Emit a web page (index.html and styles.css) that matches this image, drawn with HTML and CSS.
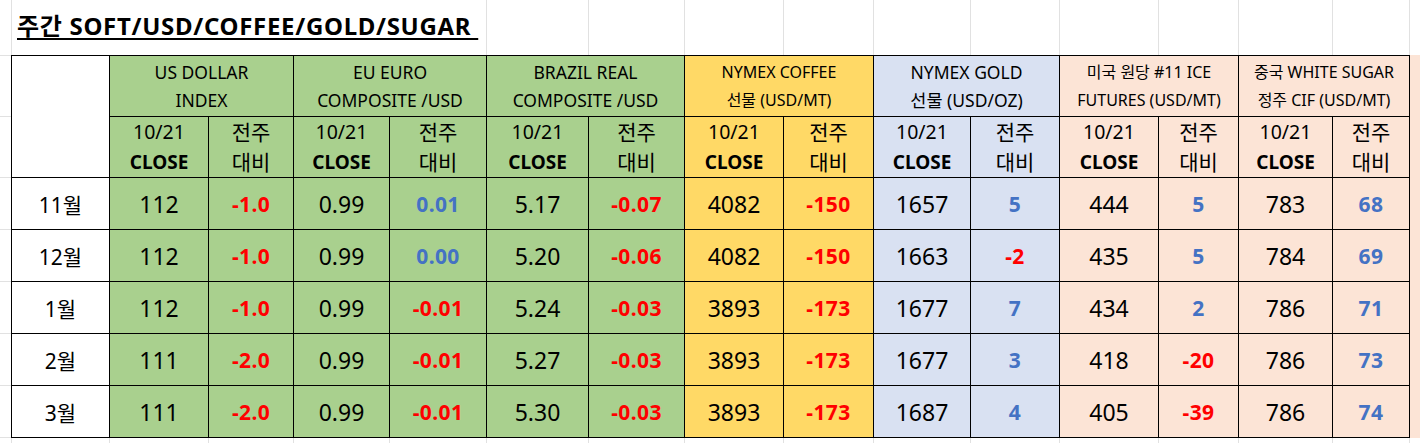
FILE: index.html
```html
<!DOCTYPE html>
<html lang="ko">
<head>
<meta charset="utf-8">
<title>주간 SOFT/USD/COFFEE/GOLD/SUGAR</title>
<link rel="stylesheet" href="styles.css">
</head>
<body>
<div class="sheet">
  <div class="title-cell"><h1 class="title">주간 SOFT/USD/COFFEE/GOLD/SUGAR </h1></div>
  <div class="board">
    <div class="tbl">
      <div class="c corner"></div>
      <div class="c grp green"><span class="h1">US DOLLAR</span><span class="h1">INDEX</span></div>
      <div class="c grp green"><span class="h1">EU EURO</span><span class="h1">COMPOSITE /USD</span></div>
      <div class="c grp green"><span class="h1">BRAZIL REAL</span><span class="h1">COMPOSITE /USD</span></div>
      <div class="c grp yellow coffee"><span class="h1">NYMEX COFFEE</span><span class="h1">선물 (USD/MT)</span></div>
      <div class="c grp blue gold"><span class="h1">NYMEX GOLD</span><span class="h1">선물 (USD/OZ)</span></div>
      <div class="c grp peach sugar"><span class="h1">미국 원당 #11 ICE</span><span class="h1">FUTURES (USD/MT)</span></div>
      <div class="c grp peach sugar"><span class="h1">중국 WHITE SUGAR</span><span class="h1">정주 CIF (USD/MT)</span></div>

      <div class="c sub green"><span>10/21</span><b>CLOSE</b></div>
      <div class="c sub green"><span class="kr">전주</span><span class="kr">대비</span></div>
      <div class="c sub green"><span>10/21</span><b>CLOSE</b></div>
      <div class="c sub green"><span class="kr">전주</span><span class="kr">대비</span></div>
      <div class="c sub green"><span>10/21</span><b>CLOSE</b></div>
      <div class="c sub green"><span class="kr">전주</span><span class="kr">대비</span></div>
      <div class="c sub yellow"><span>10/21</span><b>CLOSE</b></div>
      <div class="c sub yellow"><span class="kr">전주</span><span class="kr">대비</span></div>
      <div class="c sub blue"><span>10/21</span><b>CLOSE</b></div>
      <div class="c sub blue"><span class="kr">전주</span><span class="kr">대비</span></div>
      <div class="c sub peach"><span>10/21</span><b>CLOSE</b></div>
      <div class="c sub peach"><span class="kr">전주</span><span class="kr">대비</span></div>
      <div class="c sub peach"><span>10/21</span><b>CLOSE</b></div>
      <div class="c sub peach"><span class="kr">전주</span><span class="kr">대비</span></div>

      <div class="c month">11월</div>
      <div class="c val green">112</div><div class="c chg green neg">-1.0</div>
      <div class="c val green">0.99</div><div class="c chg green pos">0.01</div>
      <div class="c val green">5.17</div><div class="c chg green neg">-0.07</div>
      <div class="c val yellow">4082</div><div class="c chg yellow neg">-150</div>
      <div class="c val blue">1657</div><div class="c chg blue pos">5</div>
      <div class="c val peach">444</div><div class="c chg peach pos">5</div>
      <div class="c val peach">783</div><div class="c chg peach pos">68</div>

      <div class="c month">12월</div>
      <div class="c val green">112</div><div class="c chg green neg">-1.0</div>
      <div class="c val green">0.99</div><div class="c chg green pos">0.00</div>
      <div class="c val green">5.20</div><div class="c chg green neg">-0.06</div>
      <div class="c val yellow">4082</div><div class="c chg yellow neg">-150</div>
      <div class="c val blue">1663</div><div class="c chg blue neg">-2</div>
      <div class="c val peach">435</div><div class="c chg peach pos">5</div>
      <div class="c val peach">784</div><div class="c chg peach pos">69</div>

      <div class="c month">1월</div>
      <div class="c val green">112</div><div class="c chg green neg">-1.0</div>
      <div class="c val green">0.99</div><div class="c chg green neg">-0.01</div>
      <div class="c val green">5.24</div><div class="c chg green neg">-0.03</div>
      <div class="c val yellow">3893</div><div class="c chg yellow neg">-173</div>
      <div class="c val blue">1677</div><div class="c chg blue pos">7</div>
      <div class="c val peach">434</div><div class="c chg peach pos">2</div>
      <div class="c val peach">786</div><div class="c chg peach pos">71</div>

      <div class="c month">2월</div>
      <div class="c val green">111</div><div class="c chg green neg">-2.0</div>
      <div class="c val green">0.99</div><div class="c chg green neg">-0.01</div>
      <div class="c val green">5.27</div><div class="c chg green neg">-0.03</div>
      <div class="c val yellow">3893</div><div class="c chg yellow neg">-173</div>
      <div class="c val blue">1677</div><div class="c chg blue pos">3</div>
      <div class="c val peach">418</div><div class="c chg peach neg">-20</div>
      <div class="c val peach">786</div><div class="c chg peach pos">73</div>

      <div class="c month">3월</div>
      <div class="c val green">111</div><div class="c chg green neg">-2.0</div>
      <div class="c val green">0.99</div><div class="c chg green neg">-0.01</div>
      <div class="c val green">5.30</div><div class="c chg green neg">-0.03</div>
      <div class="c val yellow">3893</div><div class="c chg yellow neg">-173</div>
      <div class="c val blue">1687</div><div class="c chg blue pos">4</div>
      <div class="c val peach">405</div><div class="c chg peach neg">-39</div>
      <div class="c val peach">786</div><div class="c chg peach pos">74</div>
    </div>
    <div class="strip"></div>
  </div>
</div>
</body>
</html>
```

FILE: styles.css
```css
* { box-sizing: border-box; margin: 0; padding: 0; }

html, body { height: 100%; }

body {
  font-family: "Noto Sans", "Noto Sans CJK KR", sans-serif;
  color: #000;
  background-color: #fff;
  background-repeat: no-repeat;
  background-image:
    linear-gradient(#e1e1e1, #e1e1e1), linear-gradient(#e1e1e1, #e1e1e1),
    linear-gradient(#e1e1e1, #e1e1e1), linear-gradient(#e1e1e1, #e1e1e1),
    linear-gradient(#e1e1e1, #e1e1e1), linear-gradient(#e1e1e1, #e1e1e1),
    linear-gradient(#e1e1e1, #e1e1e1), linear-gradient(#e1e1e1, #e1e1e1),
    linear-gradient(#e1e1e1, #e1e1e1), linear-gradient(#e1e1e1, #e1e1e1),
    linear-gradient(#e1e1e1, #e1e1e1), linear-gradient(#e1e1e1, #e1e1e1),
    linear-gradient(#e1e1e1, #e1e1e1), linear-gradient(#e1e1e1, #e1e1e1),
    linear-gradient(#e1e1e1, #e1e1e1), linear-gradient(#e1e1e1, #e1e1e1),
    linear-gradient(#e1e1e1, #e1e1e1), linear-gradient(#e1e1e1, #e1e1e1),
    linear-gradient(#e1e1e1, #e1e1e1), linear-gradient(#e1e1e1, #e1e1e1),
    linear-gradient(#e1e1e1, #e1e1e1), linear-gradient(#e1e1e1, #e1e1e1),
    linear-gradient(#e1e1e1, #e1e1e1), linear-gradient(#e1e1e1, #e1e1e1);
  background-size:
    1px 100%, 1px 100%, 1px 100%, 1px 100%, 1px 100%, 1px 100%, 1px 100%, 1px 100%,
    1px 100%, 1px 100%, 1px 100%, 1px 100%, 1px 100%, 1px 100%, 1px 100%, 1px 100%,
    11px 1px, 11px 1px, 11px 1px, 11px 1px, 11px 1px, 11px 1px, 11px 1px, 11px 1px;
  background-position:
    11px 0, 109px 0, 208px 0, 293px 0, 389px 0, 486px 0, 588px 0, 684px 0,
    783px 0, 873px 0, 970px 0, 1059px 0, 1158px 0, 1238px 0, 1332px 0, 1409px 0,
    0 55px, 0 116px, 0 177px, 0 229px, 0 281px, 0 333px, 0 385px, 0 437px;
}

.sheet {
  padding-left: 11px;
}

.title-cell {
  margin-left: 1px;
  width: 474px;
  height: 55px;
  background: #fff;
  padding: 11px 0 0 5px;
}

.title {
  font-size: 24px;
  font-weight: 700;
  line-height: 30px;
  letter-spacing: 0.7px;
  white-space: pre;
  text-decoration: underline;
  text-decoration-thickness: 2px;
  text-underline-offset: 3px;
}

.board {
  display: flex;
  align-items: stretch;
}

.tbl {
  display: grid;
  grid-template-columns: 97px 98px 84px 95px 96px 101px 95px 98px 89px 96px 88px 98px 79px 93px 76px;
  grid-template-rows: 60px 60px repeat(5, 51px);
  gap: 1px;
  padding: 1px;
  background: #000;
}

.strip {
  width: 11px;
  background: #fce4d6;
}

.c {
  display: flex;
  flex-direction: column;
  align-items: center;
  justify-content: center;
  text-align: center;
  white-space: nowrap;
  background: #fff;
}

.corner { grid-row: span 2; }
.grp { grid-column: span 2; }

.green { background: #a9d08e; }
.yellow { background: #ffd966; }
.blue { background: #d9e1f2; }
.peach { background: #fce4d6; }

.h1 {
  font-size: 17.5px;
  line-height: 28px;
}
.coffee .h1 { font-size: 16px; }
.gold .h1 { font-size: 17.5px; }
.sugar .h1 { font-size: 16px; }

.sub {
  font-size: 19.5px;
  line-height: 30px;
}
.sub b { font-weight: 700; font-size: 19px; }
.sub .kr { font-size: 21px; }

.month {
  font-size: 21px;
}

.val {
  font-size: 23px;
}

.chg {
  font-size: 21px;
  font-weight: 700;
  letter-spacing: 0.4px;
}

.neg { color: #ff0000; }
.pos { color: #4472c4; }
```
